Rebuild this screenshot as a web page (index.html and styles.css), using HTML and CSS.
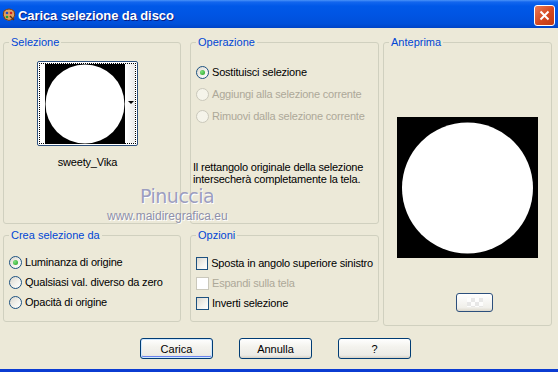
FILE: index.html
```html
<!DOCTYPE html>
<html lang="it">
<head>
    <meta charset="UTF-8">
    <title>Carica selezione da disco</title>
    <link rel="stylesheet" href="styles.css">
</head>
<body>
    <div class="window">
        <div class="titlebar">
            <svg class="app-icon" width="14" height="14" viewBox="0 0 14 14">
                <path d="M2 3 Q7 -1 12 3 Q14 7 11 11 Q7 14 3 11 Q0 7 2 3 Z" fill="#e0a060" stroke="#7a3d10" stroke-width="1"/>
                <circle cx="5" cy="5" r="1.3" fill="#2050c0"/>
                <circle cx="9" cy="5" r="1.3" fill="#d02020"/>
                <circle cx="5" cy="9" r="1.3" fill="#20a030"/>
                <path d="M8 8 L12 12" stroke="#603010" stroke-width="1.5"/>
            </svg>
            <span class="title">Carica selezione da disco</span>
            <button class="close-btn" type="button">
                <svg width="11" height="11" viewBox="0 0 11 11">
                    <path d="M1.5 1.5 L9.5 9.5 M9.5 1.5 L1.5 9.5" stroke="#fff" stroke-width="2"/>
                </svg>
            </button>
        </div>

        <div class="client">
            <div class="groups">
                <fieldset class="group sel">
                    <legend>Selezione</legend>
                    <div class="thumb-wrap">
                        <div class="thumb">
                            <div class="thumb-focus">
                                <svg class="thumb-img" width="80" height="80" viewBox="0 0 80 80">
                                    <rect width="80" height="80" fill="#000"/>
                                    <circle cx="40" cy="40" r="39.5" fill="#fff"/>
                                </svg>
                                <div class="thumb-strip"><span class="arrow"></span></div>
                            </div>
                        </div>
                        <div class="thumb-name">sweety_Vika</div>
                    </div>
                </fieldset>

                <fieldset class="group op">
                    <legend>Operazione</legend>
                    <div class="op-list">
                        <label class="opt"><span class="radio checked"></span>Sostituisci selezione</label>
                        <label class="opt disabled"><span class="radio"></span>Aggiungi alla selezione corrente</label>
                        <label class="opt disabled"><span class="radio"></span>Rimuovi dalla selezione corrente</label>
                    </div>
                    <p class="info">Il rettangolo originale della selezione intersecherà completamente la tela.</p>
                </fieldset>

                <fieldset class="group preview">
                    <legend>Anteprima</legend>
                    <svg class="preview-img" width="141" height="141" viewBox="0 0 141 141">
                        <rect width="141" height="141" fill="#000"/>
                        <circle cx="70.5" cy="71" r="65.5" fill="#fff"/>
                    </svg>
                    <button class="zoom-btn" type="button"><span class="checker"></span></button>
                </fieldset>

                <fieldset class="group crea">
                    <legend>Crea selezione da</legend>
                    <div class="opt-list">
                        <label class="opt"><span class="radio checked"></span>Luminanza di origine</label>
                        <label class="opt"><span class="radio"></span>Qualsiasi val. diverso da zero</label>
                        <label class="opt"><span class="radio"></span>Opacità di origine</label>
                    </div>
                </fieldset>

                <fieldset class="group opz">
                    <legend>Opzioni</legend>
                    <div class="opt-list">
                        <label class="opt"><span class="check"></span>Sposta in angolo superiore sinistro</label>
                        <label class="opt disabled"><span class="check"></span>Espandi sulla tela</label>
                        <label class="opt"><span class="check"></span>Inverti selezione</label>
                    </div>
                </fieldset>
            </div>

            <div class="buttons">
                <button class="btn default" type="button">Carica</button>
                <button class="btn" type="button">Annulla</button>
                <button class="btn" type="button">?</button>
            </div>

            <div class="watermark">
                <div class="wm-name">Pinuccia</div>
                <div class="wm-url">www.maidiregrafica.eu</div>
            </div>
        </div>
    </div>
</body>
</html>
```

FILE: styles.css
```css
body {
    margin: 0;
    font-family: "Liberation Sans", Arial, sans-serif;
    font-size: 11px;
    color: #000;
}

.window {
    position: relative;
    width: 558px;
    height: 372px;
    box-sizing: border-box;
    background-color: #ece9d8;
    border-bottom: 3px solid #0b3cd2;
    display: flex;
    flex-direction: column;
    overflow: hidden;
}

/* barra del titolo */
.titlebar {
    height: 28px;
    box-sizing: border-box;
    padding: 5px 3px 0 2px;
    display: flex;
    align-items: flex-start;
    background: linear-gradient(#4a93f8 0, #1366ee 2px, #0058e8 6px, #0055e4 50%, #0050da 85%, #0044c6 100%);
}

.app-icon {
    margin-top: 3px;
    margin-right: 2px;
}

.title {
    flex: 1;
    color: #fff;
    font-weight: bold;
    font-size: 13px;
    line-height: 21px;
    letter-spacing: -0.1px;
    text-shadow: 1px 1px 0 #0a1d80;
}

.close-btn {
    width: 21px;
    height: 21px;
    padding: 0;
    border: 1px solid #fff;
    border-radius: 3px;
    background: linear-gradient(135deg, #ec7b56, #d4481f 55%, #bf3a14);
    display: flex;
    align-items: center;
    justify-content: center;
}

/* area client */
.client {
    flex: 1;
    padding: 8px 6px 0 3px;
}

.groups {
    display: grid;
    grid-template-columns: 178px 194px 169px;
    grid-template-rows: 188px 97px;
    column-gap: 4px;
    row-gap: 5px;
}

.group {
    margin: 0;
    min-width: 0;
    padding: 0 5px;
    border: 1px solid #d0d0bf;
    border-radius: 3px;
    box-sizing: border-box;
}

.group legend {
    padding: 0 2px;
    color: #0046d5;
    line-height: 13px;
}

.sel {
    grid-column: 1;
    grid-row: 1;
}

.op {
    grid-column: 2;
    grid-row: 1;
    margin-left: 5px;
}

.preview {
    grid-column: 3;
    grid-row: 1 / 3;
    display: flex;
    flex-direction: column;
    align-items: center;
}

.crea {
    grid-column: 1;
    grid-row: 2;
    height: 93px;
}

.opz {
    grid-column: 2;
    grid-row: 2;
    margin-left: 5px;
    height: 93px;
}

/* miniatura selezione */
.thumb-wrap {
    width: 101px;
    margin: 12px 0 0 28px;
}

.thumb {
    height: 85px;
    box-sizing: border-box;
    border: 1px solid #2c4f7c;
    border-radius: 2px;
    padding: 1px;
    background: #fff;
}

.thumb-focus {
    height: 100%;
    box-sizing: border-box;
    border: 1px dotted #000;
    display: flex;
    padding-left: 5px;
}

.thumb-img {
    display: block;
}

.thumb-strip {
    flex: 1;
    position: relative;
    background: linear-gradient(90deg, #fff, #ebebeb);
}

.arrow {
    position: absolute;
    right: 1px;
    top: 37px;
    border-left: 3px solid transparent;
    border-right: 3px solid transparent;
    border-top: 3px solid #000;
}

.thumb-name {
    margin-top: 10px;
    text-align: center;
    line-height: 13px;
    letter-spacing: -0.2px;
}

/* opzioni */
.op-list {
    margin-top: 17px;
    display: flex;
    flex-direction: column;
    gap: 9px;
}

.opt-list {
    margin-top: 14px;
    display: flex;
    flex-direction: column;
    gap: 7px;
}

.opz .opt-list {
    margin-top: 15px;
}

.opt {
    display: flex;
    align-items: center;
    gap: 3px;
    line-height: 13px;
    letter-spacing: -0.2px;
    white-space: nowrap;
}

.opt.disabled {
    color: #aca899;
}

.radio {
    width: 13px;
    height: 13px;
    box-sizing: border-box;
    border: 1px solid #1c5180;
    border-radius: 50%;
    background: linear-gradient(135deg, #dcd9d0, #f4f3ee 60%, #fff);
    display: flex;
    align-items: center;
    justify-content: center;
}

.radio.checked::after {
    content: "";
    width: 5px;
    height: 5px;
    border-radius: 50%;
    background: radial-gradient(circle at 35% 35%, #7ee27e, #21a121);
}

.disabled .radio {
    border-color: #cac8bb;
    background: #f5f4ea;
}

.check {
    width: 13px;
    height: 13px;
    box-sizing: border-box;
    border: 1px solid #1c5180;
    background: linear-gradient(135deg, #dcd9d0, #f4f3ee 60%, #fff);
}

.disabled .check {
    border-color: #cac8bb;
    background: #fff;
}

.info {
    margin: 38px 0 0 -3px;
    line-height: 12px;
    letter-spacing: -0.2px;
}

/* anteprima */
.preview-img {
    display: block;
    margin-top: 68px;
}

.zoom-btn {
    align-self: flex-start;
    margin: 35px 0 0 67px;
    width: 37px;
    height: 19px;
    padding: 0;
    border: 1px solid #2c4f7c;
    border-radius: 3px;
    background: linear-gradient(#fff, #f0efea 80%, #dcd8cc);
    display: flex;
    align-items: center;
    justify-content: center;
}

.checker {
    width: 16px;
    height: 9px;
    background: repeating-conic-gradient(#e4e4e4 0 25%, #fff 0 50%) 0 0 / 8px 8px;
    opacity: 0.8;
}

/* pulsanti */
.buttons {
    margin-top: 12px;
    padding-right: 4px;
    display: flex;
    justify-content: center;
    gap: 26px;
}

.btn {
    width: 73px;
    height: 21px;
    padding: 0;
    border: 1px solid #003c74;
    border-radius: 3px;
    background: linear-gradient(#fff, #f4f3ee 40%, #ecebe6 85%, #d6d0c5);
    font-family: "Liberation Sans", Arial, sans-serif;
    font-size: 11px;
    color: #000;
}

.btn.default {
    box-shadow: inset 0 0 0 1px #cee7ff, inset 0 -1px 0 1px #6982ee;
}

/* filigrana */
.watermark {
    position: absolute;
    left: 107px;
    top: 183px;
    width: 130px;
    color: #9c9ec0;
}

.wm-name {
    margin-left: 33px;
    font-family: "DejaVu Sans", sans-serif;
    font-size: 19px;
    line-height: 26px;
    letter-spacing: -0.5px;
    text-shadow: 1px 1px 0 #fff;
}

.wm-url {
    font-size: 12px;
    line-height: 14px;
    color: #8e90aa;
    text-shadow: 1px 1px 0 #fff;
}
```
